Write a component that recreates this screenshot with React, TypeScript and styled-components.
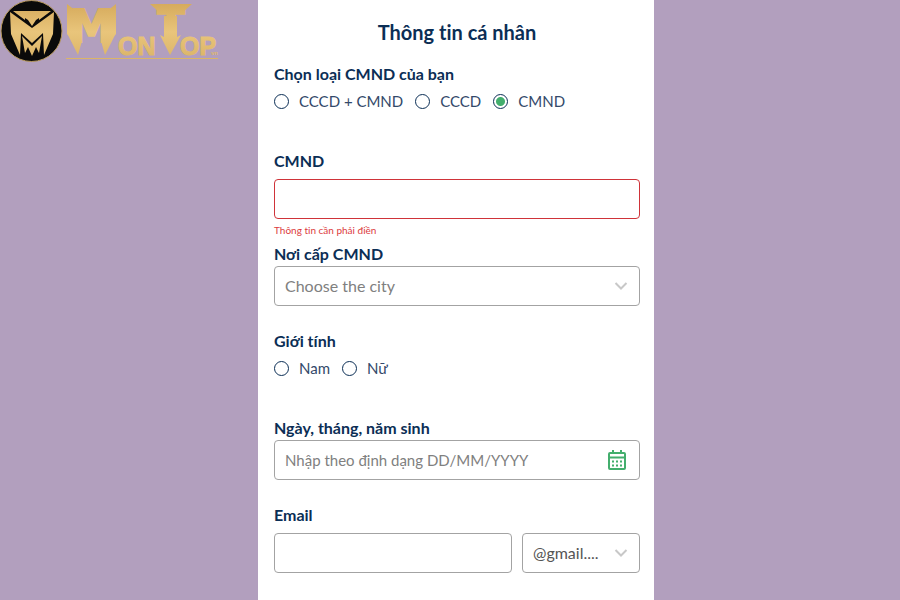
import React from "react";
import styled, { createGlobalStyle } from "styled-components";

const GlobalStyle = createGlobalStyle`
  *, *::before, *::after { box-sizing: border-box; }
  body {
    margin: 0;
    background: #b29fbe;
    color: #0b2e55;
    font-family: Lato, "Noto Sans", sans-serif;
    font-size: 16px;
    line-height: 20px;
    font-variant-ligatures: none;
  }
  input, select, button { font: inherit; color: inherit; }
`;

const Page = styled.div`
  display: grid;
  grid-template-columns: 258fr 396fr 246fr;
  min-height: 100vh;
`;

const Brand = styled.header`
  svg { display: block; }
`;

const Panel = styled.main`
  background: #fff;
  padding: 20px 14px 20px 16px;
`;

const Title = styled.h1`
  margin: 0 0 20px;
  font-size: 20px;
  line-height: 24px;
  font-weight: 700;
  text-align: center;
`;

const Group = styled.fieldset`
  border: 0;
  margin: 0 0 40px;
  padding: 0;
  min-width: 0;
`;

const Legend = styled.legend`
  padding: 0;
  margin-bottom: 7px;
  font-weight: 700;
`;

const Options = styled.div`
  display: flex;
  gap: 12px;
`;

const Option = styled.label`
  display: flex;
  align-items: center;
  gap: 10px;
  color: #33496a;
  font-size: 15px;
`;

const Radio = styled.input`
  appearance: none;
  width: 15px;
  height: 15px;
  margin: 0;
  border: 1px solid #0b2e55;
  border-radius: 50%;
  &:checked { background: radial-gradient(circle, #43ae6d 4px, #fff 5px); }
`;

const Field = styled.div<{ $gap: number }>`
  margin-bottom: ${(p) => p.$gap}px;
`;

const Label = styled.label<{ $spaced?: boolean }>`
  display: block;
  margin-bottom: ${(p) => (p.$spaced ? 8 : 2)}px;
  font-weight: 700;
`;

const Box = styled.div<{ $error?: boolean }>`
  display: flex;
  align-items: center;
  height: 40px;
  border: 1px solid ${(p) => (p.$error ? "#cf3339" : "#a3a3a3")};
  border-radius: 4px;
  background: #fff;
`;

const Input = styled.input`
  flex: 1;
  min-width: 0;
  height: 100%;
  padding: 0 10px;
  border: 0;
  outline: 0;
  background: transparent;
  font-size: 15px;
  &::placeholder { color: #808080; opacity: 1; }
`;

const SelectBox = styled(Box)`
  display: grid;
  grid-template-columns: 1fr 36px;
  > * { grid-row: 1; }
  svg { grid-column: 2; justify-self: center; pointer-events: none; }
`;

const Select = styled.select<{ $muted?: boolean }>`
  grid-column: 1 / -1;
  appearance: none;
  width: 100%;
  height: 100%;
  padding: 0 36px 0 10px;
  border: 0;
  outline: 0;
  background: transparent;
  color: ${(p) => (p.$muted ? "#808080" : "#555")};
`;

const ErrorText = styled.p`
  margin: 4px 0 0;
  color: #dc3b40;
  font-size: 10px;
  line-height: 14px;
`;

const EmailRow = styled.div`
  display: grid;
  grid-template-columns: 1fr 118px;
  gap: 10px;
`;

const IconButton = styled.button`
  display: flex;
  padding: 0;
  margin-right: 12px;
  border: 0;
  background: none;
  color: #43ae6d;
`;

const Chevron = () => (
  <svg width="14" height="10" viewBox="0 0 14 10" fill="none" stroke="#c8c8c8" strokeWidth="2" aria-hidden="true">
    <path d="M1.5 2 7 7.5 12.5 2" />
  </svg>
);

const Calendar = () => (
  <svg width="20" height="22" viewBox="0 0 20 22" fill="none" stroke="currentColor" strokeWidth="2" aria-hidden="true">
    <rect x="2" y="4" width="16" height="16" rx="1" />
    <path d="M2 8.5h16M6 1v4M14 1v4" />
    <path d="M5 12.5h2m2 0h2m2 0h2M5 16.5h2m2 0h2m2 0h2" />
  </svg>
);

const Logo = () => (
  <svg width="222" height="64" viewBox="0 0 222 64" role="img" aria-label="MonTop">
    <defs>
      <linearGradient id="gold" x1="0" y1="0" x2="0" y2="64" gradientUnits="userSpaceOnUse">
        <stop offset="0" stopColor="#d3a758" />
        <stop offset="0.5" stopColor="#e9c57b" />
        <stop offset="1" stopColor="#d9b163" />
      </linearGradient>
    </defs>
    <circle cx="31.5" cy="31" r="30.5" fill="#0a0a0a" stroke="#b99a5d" />
    <g fill="url(#gold)">
      <path d="M13 11H51L39 20V18L36 20 32 26 28 20 25 18V20Z" />
      <path d="M10 12 32 28 54 12 53 34 44 55 43 33 32 43 21 33 20 55 11 34Z" />
      <path d="M22 36 32 46 42 36 39 53 36 47 32 56 28 47 25 53Z" />
      <path d="M67 4 76 11V43L67 34ZM116 4 107 11V43L116 34Z" />
      <path d="M67 33 82 41 78 55ZM116 33 101 41 105 55Z" />
      <g fontFamily="DejaVu Sans, sans-serif" fontWeight="700" textAnchor="middle" stroke="url(#gold)" strokeWidth="2">
        <text x="91.5" y="42" fontSize="45">M</text>
        <text x="171" y="38" fontSize="40">T</text>
      </g>
      <g fontFamily="Liberation Sans, sans-serif" fontWeight="700">
        <text x="118" y="55" fontSize="25" stroke="url(#gold)">ON</text>
        <text x="180" y="55" fontSize="25" stroke="url(#gold)">OP</text>
        <text x="211" y="55" fontSize="6">vn</text>
      </g>
      <path d="M150 4H192L182 13H160Z" />
      <path d="M164 16H177V37L181 35 170 55 160 35 164 37Z" />
      <path d="M66 58H218V59H66Z" />
    </g>
  </svg>
);

export default function App() {
  return (
    <>
      <GlobalStyle />
      <Page>
        <Brand><Logo /></Brand>
        <Panel>
          <Title>Thông tin cá nhân</Title>
          <form>
            <Group>
              <Legend>Chọn loại CMND của bạn</Legend>
              <Options>
                <Option><Radio type="radio" name="kind" />CCCD + CMND</Option>
                <Option><Radio type="radio" name="kind" />CCCD</Option>
                <Option><Radio type="radio" name="kind" defaultChecked />CMND</Option>
              </Options>
            </Group>
            <Field $gap={7}>
              <Label htmlFor="cmnd" $spaced>CMND</Label>
              <Box $error><Input id="cmnd" aria-invalid="true" aria-describedby="cmnd-error" /></Box>
              <ErrorText id="cmnd-error">Thông tin cần phải điền</ErrorText>
            </Field>
            <Field $gap={25}>
              <Label htmlFor="city">Nơi cấp CMND</Label>
              <SelectBox>
                <Select id="city" $muted><option>Choose the city</option></Select>
                <Chevron />
              </SelectBox>
            </Field>
            <Group>
              <Legend>Giới tính</Legend>
              <Options>
                <Option><Radio type="radio" name="gender" />Nam</Option>
                <Option><Radio type="radio" name="gender" />Nữ</Option>
              </Options>
            </Group>
            <Field $gap={25}>
              <Label htmlFor="birth">Ngày, tháng, năm sinh</Label>
              <Box>
                <Input id="birth" placeholder="Nhập theo định dạng DD/MM/YYYY" />
                <IconButton type="button" aria-label="Calendar"><Calendar /></IconButton>
              </Box>
            </Field>
            <Field $gap={0}>
              <Label htmlFor="email" $spaced>Email</Label>
              <EmailRow>
                <Box><Input id="email" /></Box>
                <SelectBox>
                  <Select aria-label="Email domain"><option>@gmail....</option></Select>
                  <Chevron />
                </SelectBox>
              </EmailRow>
            </Field>
          </form>
        </Panel>
      </Page>
    </>
  );
}
